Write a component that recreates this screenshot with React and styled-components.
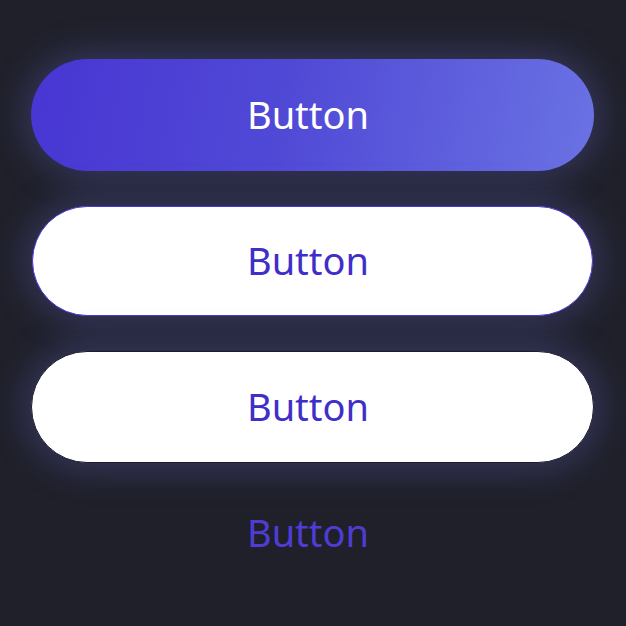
import React from 'react'
import styled, { createGlobalStyle, css } from 'styled-components'

const GlobalStyle = createGlobalStyle`
  html, body {
    margin: 0;
    padding: 0;
    background: #1f2029;
  }
  body {
    font-family: "Noto Sans", Lato, sans-serif;
  }
`

const Page = styled.div`
  width: 626px;
  height: 626px;
  box-sizing: border-box;
  padding: 59px 32px 0 31px;
  display: flex;
  flex-direction: column;
  gap: 35px;
  background: #1f2029;
`

const glow = css`
  box-shadow: 0 0 36px 6px rgba(105, 108, 215, 0.32);
`

const Button = styled.button`
  height: 112px;
  width: 100%;
  border-radius: 56px;
  display: flex;
  align-items: center;
  justify-content: center;
  padding: 0 9px 2px 0;
  font-family: "Noto Sans", Lato, sans-serif;
  font-size: 38px;
  font-weight: 400;
  cursor: pointer;
  box-sizing: border-box;

  ${({ $variant }) =>
    $variant === 'primary' &&
    css`
      ${glow};
      border: none;
      color: #ffffff;
      background: linear-gradient(100deg, #4836d3 0%, #5049d6 45%, #6a72e3 100%);
    `}

  ${({ $variant }) =>
    $variant === 'outline' &&
    css`
      ${glow};
      height: 110px;
      margin: 0 1px;
      width: calc(100% - 2px);
      border: 1.5px solid #4b38d6;
      color: #3f2ec8;
      background: #ffffff;
    `}

  ${({ $variant }) =>
    $variant === 'plain' &&
    css`
      ${glow};
      border: 1px solid #1c1c2e;
      color: #3f2ec8;
      background: #ffffff;
    `}

  ${({ $variant }) =>
    $variant === 'ghost' &&
    css`
      height: 70px;
      border: none;
      background: transparent;
      color: #4e3dd2;
    `}
`

export default function App() {
  return (
    <>
      <GlobalStyle />
      <Page>
        <Button $variant="primary">Button</Button>
        <Button $variant="outline">Button</Button>
        <Button $variant="plain">Button</Button>
        <Button $variant="ghost">Button</Button>
      </Page>
    </>
  )
}
